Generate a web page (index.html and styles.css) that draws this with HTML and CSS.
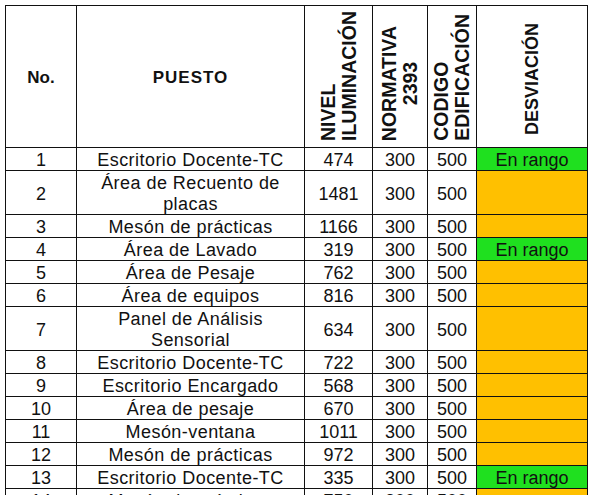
FILE: index.html
```html
<!DOCTYPE html>
<html lang="es">
<head>
<meta charset="utf-8">
<title>Niveles de iluminación</title>
<link rel="stylesheet" href="styles.css">
</head>
<body>
<div class="sheet">
  <div class="hd">No.</div>
  <div class="hd hd-wide">PUESTO</div>
  <div class="hd hd-rot"><span class="rot big">NIVEL<br>ILUMINACIÓN</span></div>
  <div class="hd hd-rot"><span class="rot big center">NORMATIVA<br>2393</span></div>
  <div class="hd hd-rot"><span class="rot big">CODIGO<br>EDIFICACIÓN</span></div>
  <div class="hd hd-rot hd-mid"><span class="rot">DESVIACIÓN</span></div>

  <div class="c">1</div><div class="c p">Escritorio Docente-TC</div><div class="c">474</div><div class="c">300</div><div class="c">500</div><div class="c ok">En rango</div>
  <div class="c">2</div><div class="c p wrap">Área de Recuento de<br>placas</div><div class="c">1481</div><div class="c">300</div><div class="c">500</div><div class="c bad"></div>
  <div class="c">3</div><div class="c p">Mesón de prácticas</div><div class="c">1166</div><div class="c">300</div><div class="c">500</div><div class="c bad"></div>
  <div class="c">4</div><div class="c p">Área de Lavado</div><div class="c">319</div><div class="c">300</div><div class="c">500</div><div class="c ok">En rango</div>
  <div class="c">5</div><div class="c p">Área de Pesaje</div><div class="c">762</div><div class="c">300</div><div class="c">500</div><div class="c bad"></div>
  <div class="c">6</div><div class="c p">Área de equipos</div><div class="c">816</div><div class="c">300</div><div class="c">500</div><div class="c bad"></div>
  <div class="c">7</div><div class="c p wrap">Panel de Análisis<br>Sensorial</div><div class="c">634</div><div class="c">300</div><div class="c">500</div><div class="c bad"></div>
  <div class="c">8</div><div class="c p">Escritorio Docente-TC</div><div class="c">722</div><div class="c">300</div><div class="c">500</div><div class="c bad"></div>
  <div class="c">9</div><div class="c p">Escritorio Encargado</div><div class="c">568</div><div class="c">300</div><div class="c">500</div><div class="c bad"></div>
  <div class="c">10</div><div class="c p">Área de pesaje</div><div class="c">670</div><div class="c">300</div><div class="c">500</div><div class="c bad"></div>
  <div class="c">11</div><div class="c p">Mesón-ventana</div><div class="c">1011</div><div class="c">300</div><div class="c">500</div><div class="c bad"></div>
  <div class="c">12</div><div class="c p">Mesón de prácticas</div><div class="c">972</div><div class="c">300</div><div class="c">500</div><div class="c bad"></div>
  <div class="c">13</div><div class="c p">Escritorio Docente-TC</div><div class="c">335</div><div class="c">300</div><div class="c">500</div><div class="c ok">En rango</div>
  <div class="c">14</div><div class="c p">Mesón de prácticas</div><div class="c">750</div><div class="c">300</div><div class="c">500</div><div class="c bad"></div>
</div>
</body>
</html>
```

FILE: styles.css
```css
html, body {
  margin: 0;
  padding: 0;
  background: #ffffff;
  overflow: hidden;
}

body {
  padding: 5px 0 0 5px;
  font-family: "Liberation Sans", Arial, sans-serif;
  color: #111111;
}

.sheet {
  display: grid;
  grid-template-columns: 70px 227px 67px 54px 48px 110px;
  grid-template-rows: 141px 22px 43px 22px 22px 22px 22px 43px 22px 22px 22px 22px 22px 22px 22px;
  gap: 1px;
  padding: 1px;
  background: #111111;
  width: max-content;
}

.hd {
  background: #ffffff;
  display: flex;
  align-items: center;
  justify-content: center;
  font-weight: bold;
  font-size: 17px;
  padding-top: 3px;
}

.hd-wide {
  letter-spacing: 1px;
}

.hd-rot {
  align-items: flex-end;
  padding: 0 0 6px 0;
}

.hd-mid {
  align-items: center;
  padding: 6px 0 0 0;
}

.rot {
  writing-mode: vertical-rl;
  transform: rotate(180deg);
  font-size: 18px;
  line-height: 21px;
  text-align: start;
  white-space: nowrap;
}

.rot.big {
  font-size: 19.5px;
  line-height: 21px;
}

.rot.center {
  text-align: center;
}

.c {
  background: #ffffff;
  display: flex;
  align-items: center;
  justify-content: center;
  text-align: center;
  font-size: 18px;
  line-height: 20px;
  padding-top: 2px;
  white-space: nowrap;
  overflow: hidden;
}

.c.p {
  letter-spacing: 0.45px;
}

.c.wrap {
  line-height: 21px;
}

.ok {
  background: #1fe01f;
}

.bad {
  background: #ffc000;
}
```
